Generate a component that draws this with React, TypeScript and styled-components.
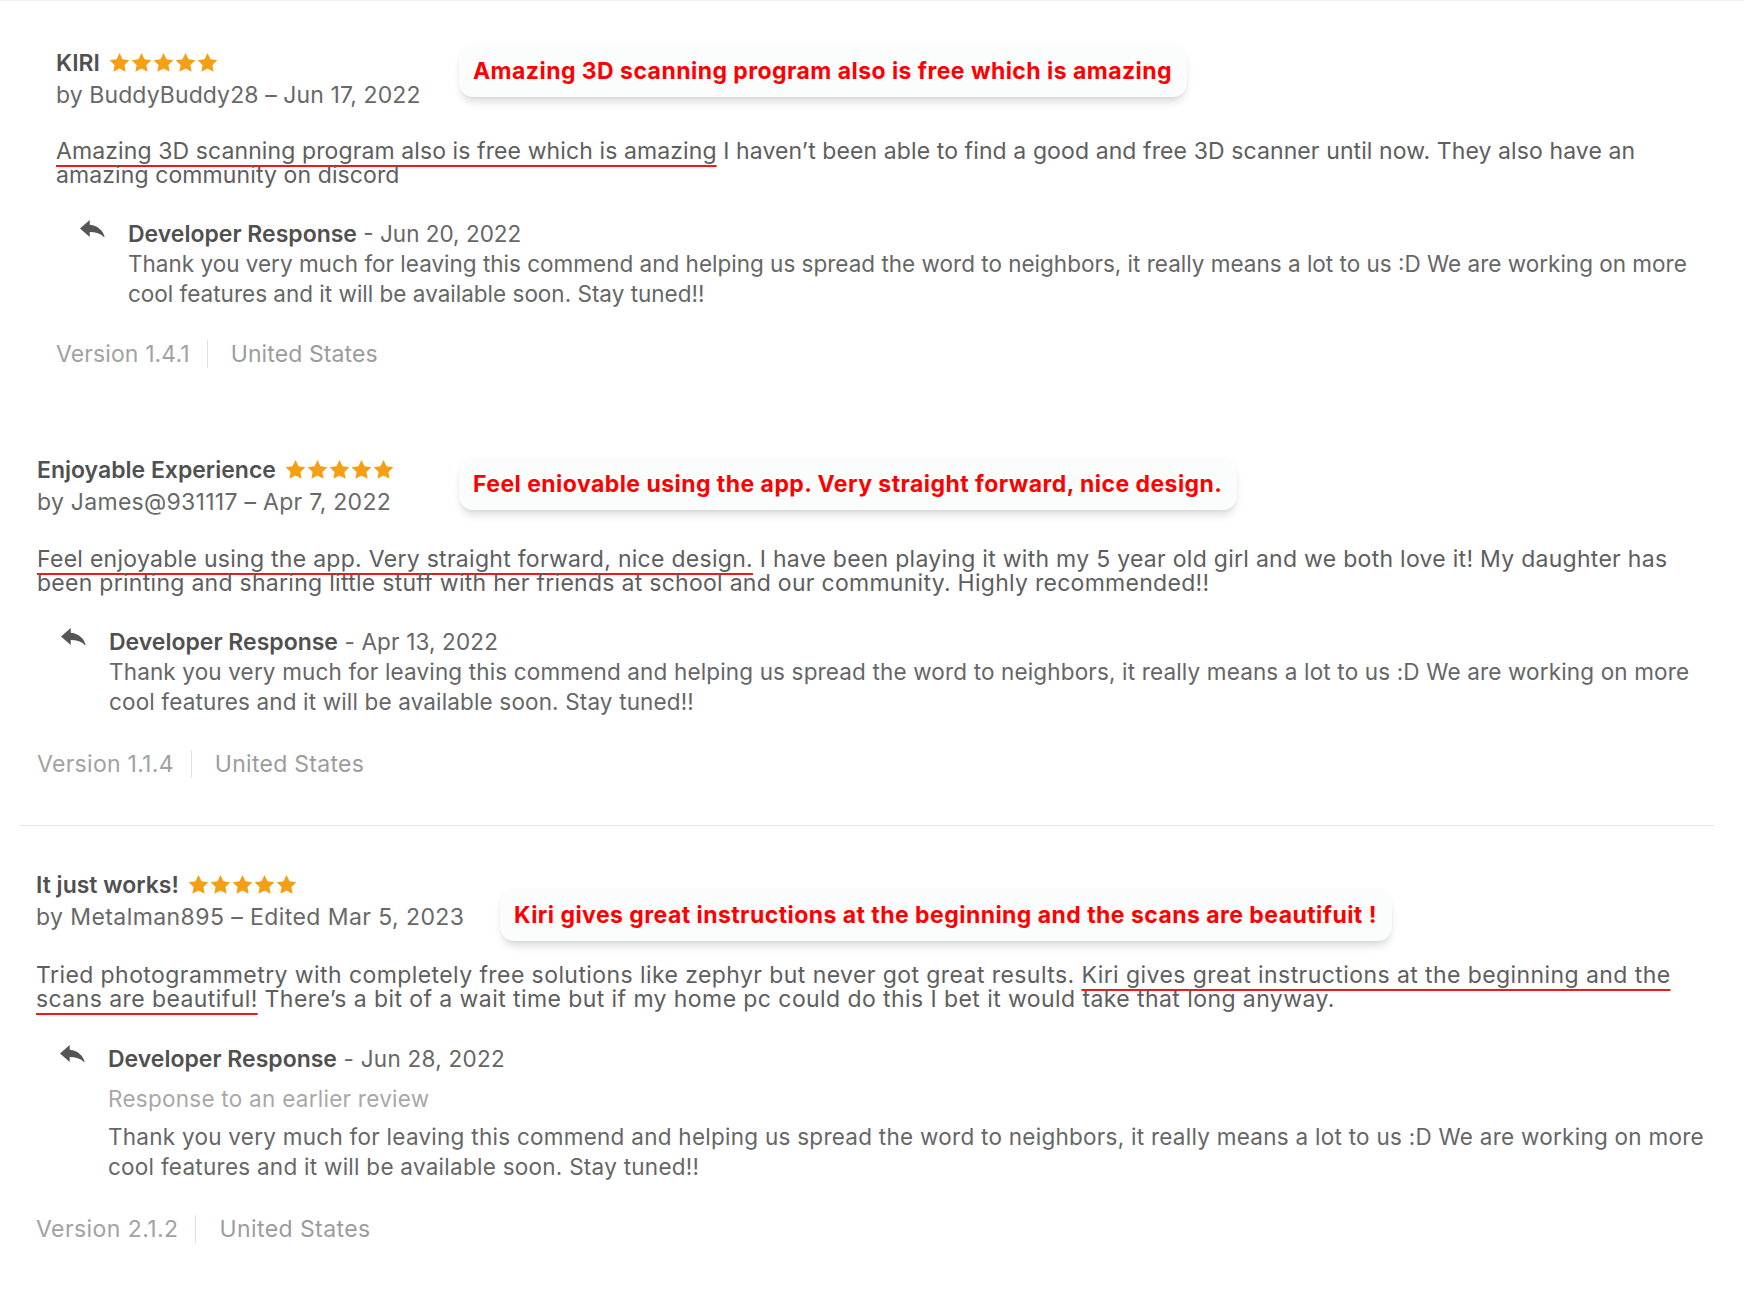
import React from "react";
import styled, { createGlobalStyle } from "styled-components";

const GlobalStyle = createGlobalStyle`
  html, body { margin: 0; padding: 0; background: #ffffff; }
  body { font-family: Inter, "Noto Sans", "Liberation Sans", sans-serif; -webkit-font-smoothing: antialiased; }
`;

const Page = styled.main`
  width: 1744px;
  min-height: 1290px;
  box-sizing: border-box;
  padding-top: 45px;
  border-top: 1px solid #f1f1f1;
  background: #ffffff;
`;

const Review = styled.section<{ $left: number; $gapTop: number; $track: number; $rtrack: number }>`
  --track: ${(p) => p.$track}px;
  --rtrack: ${(p) => p.$rtrack}px;
  position: relative;
  padding-left: ${(p) => p.$left}px;
  margin-top: ${(p) => p.$gapTop}px;
`;

const TitleRow = styled.div`
  display: flex;
  align-items: center;
  height: 33px;
  gap: 9px;
`;

const Title = styled.span`
  font-size: 23px;
  font-weight: 600;
  color: #505050;
`;

const Stars = styled.span`
  display: inline-flex;
  gap: 1px;
  margin-top: -1px;
`;

const Sub = styled.div`
  font-size: 23px;
  line-height: 33px;
  color: #686868;
  letter-spacing: calc(0.1px + var(--track));
`;

const Body = styled.p<{ $extra: number }>`
  margin: ${(p) => 26 + p.$extra}px 0 0 0;
  font-size: 23px;
  line-height: 24px;
  color: #5e5e5e;
  white-space: nowrap;
  letter-spacing: calc(0.1px + var(--track));
`;

const Marked = styled.span`
  text-decoration: underline;
  text-decoration-color: #f01818;
  text-decoration-thickness: 2px;
  text-underline-offset: 6px;
  text-decoration-skip-ink: none;
`;

const Response = styled.div<{ $extra: number }>`
  display: grid;
  grid-template-columns: 72px 1fr;
  margin-top: ${(p) => 32 + p.$extra}px;
`;

const ReplyIcon = styled.svg`
  margin: 1px 0 0 24px;
  width: 25px;
  height: 17px;
  fill: #555555;
`;

const ResponseHead = styled.div`
  font-size: 22.5px;
  line-height: 30px;
  color: #666666;
  white-space: nowrap;
  letter-spacing: var(--rtrack);
`;

const DevName = styled.span`
  font-size: 23px;
  font-weight: 600;
  color: #505050;
  letter-spacing: 0;
`;

const EarlierNote = styled.div`
  margin: 10px 0 8px 0;
  font-size: 22.5px;
  line-height: 30px;
  color: #a8a8a8;
  letter-spacing: var(--rtrack);
`;

const ResponseText = styled.p`
  margin: 0;
  font-size: 22.5px;
  line-height: 30px;
  color: #666666;
  white-space: nowrap;
  letter-spacing: var(--rtrack);
`;

const Meta = styled.div<{ $extra: number }>`
  display: flex;
  align-items: center;
  margin-top: ${(p) => 31 + p.$extra}px;
  height: 30px;
  font-size: 23px;
  color: #a2a2a2;
  letter-spacing: calc(0.1px + var(--track));
`;

const Version = styled.span`
  padding-right: 17px;
  border-right: 1px solid #e2e2e2;
  line-height: 28px;
`;

const Country = styled.span`
  padding-left: 23px;
  color: #9c9c9c;
`;

const Divider = styled.hr`
  border: none;
  border-top: 1px solid #e4e4e4;
  margin: 46px 30px 0 20px;
`;

const Callout = styled.div<{ $x: number; $y: number }>`
  position: absolute;
  left: ${(p) => p.$x}px;
  top: ${(p) => p.$y}px;
  height: 53px;
  box-sizing: border-box;
  padding: 0 15px 0 14px;
  display: flex;
  align-items: center;
  background: #fbfdfd;
  border-radius: 14px;
  box-shadow: 0 7px 10px -3px rgba(0, 0, 0, 0.16), 0 1px 3px rgba(0, 0, 0, 0.04);
  font-family: Inter, "Liberation Sans", sans-serif;
  font-weight: 700;
  font-size: 23px;
  letter-spacing: 0.45px;
  color: #ff0000;
  white-space: nowrap;
`;

const StarIcon = () => (
  <svg width="21" height="19" viewBox="2 2 20 19.3" aria-hidden="true">
    <path
      fill="#f5a014"
      d="M12 2l3.09 6.26L22 9.27l-5 4.87 1.18 6.88L12 17.77l-6.18 3.25L7 14.14 2 9.27l6.91-1.01L12 2z"
    />
  </svg>
);

const FiveStars = () => (
  <Stars>
    {[0, 1, 2, 3, 4].map((i) => (
      <StarIcon key={i} />
    ))}
  </Stars>
);

const Reply = () => (
  <ReplyIcon viewBox="3 5 18 14" preserveAspectRatio="none" aria-hidden="true">
    <path d="M10 9V5l-7 7 7 7v-4.1c5 0 8.5 1.6 11 5.1-1-5-4-10-11-11z" />
  </ReplyIcon>
);

type ReviewData = {
  title: string;
  sub: string;
  left: number;
  gapTop: number;
  track: number;
  rtrack: number;
  bodyExtra: number;
  responseExtra: number;
  metaExtra: number;
  callout: { text: string; x: number; y: number };
  body: React.ReactNode;
  devDate: string;
  earlier?: boolean;
  version: string;
};

const responseLines = (
  <>
    Thank you very much for leaving this commend and helping us spread the word to neighbors, it really means a lot to us :D We are working on more
    <br />
    cool features and it will be available soon. Stay tuned!!
  </>
);

const reviews: ReviewData[] = [
  {
    title: "KIRI",
    sub: "by BuddyBuddy28 – Jun 17, 2022",
    left: 56,
    gapTop: 0,
    track: 0,
    rtrack: 0,
    bodyExtra: 1,
    responseExtra: 0,
    metaExtra: -1,
    callout: { text: "Amazing 3D scanning program also is free which is amazing", x: 459, y: -2 },
    body: (
      <>
        <Marked>Amazing 3D scanning program also is free which is amazing</Marked> I haven’t been able to find a good and free 3D scanner until now. They also have an
        <br />
        amazing community on discord
      </>
    ),
    devDate: "Jun 20, 2022",
    version: "Version 1.4.1",
  },
  {
    title: "Enjoyable Experience",
    sub: "by James@931117 – Apr 7, 2022",
    left: 37,
    gapTop: 84,
    track: 0.18,
    rtrack: 0.15,
    bodyExtra: 2,
    responseExtra: 0,
    metaExtra: 1,
    callout: { text: "Feel eniovable using the app. Very straight forward, nice design.", x: 459, y: 4 },
    body: (
      <>
        <Marked>Feel enjoyable using the app. Very straight forward, nice design.</Marked> I have been playing it with my 5 year old girl and we both love it! My daughter has
        <br />
        been printing and sharing little stuff with her friends at school and our community. Highly recommended!!
      </>
    ),
    devDate: "Apr 13, 2022",
    version: "Version 1.1.4",
  },
  {
    title: "It just works!",
    sub: "by Metalman895 – Edited Mar 5, 2023",
    left: 36,
    gapTop: 42,
    track: 0.32,
    rtrack: 0.26,
    bodyExtra: 3,
    responseExtra: 1,
    metaExtra: 1,
    callout: { text: "Kiri gives great instructions at the beginning and the scans are beautifuit !", x: 500, y: 20 },
    body: (
      <>
        Tried photogrammetry with completely free solutions like zephyr but never got great results. <Marked>Kiri gives great instructions at the beginning and the</Marked>
        <br />
        <Marked>scans are beautiful!</Marked> There’s a bit of a wait time but if my home pc could do this I bet it would take that long anyway.
      </>
    ),
    devDate: "Jun 28, 2022",
    earlier: true,
    version: "Version 2.1.2",
  },
];

const ReviewCard = ({ r }: { r: ReviewData }) => (
  <Review $left={r.left} $gapTop={r.gapTop} $track={r.track} $rtrack={r.rtrack}>
    <TitleRow>
      <Title>{r.title}</Title>
      <FiveStars />
    </TitleRow>
    <Sub>{r.sub}</Sub>
    <Callout $x={r.callout.x} $y={r.callout.y}>
      {r.callout.text}
    </Callout>
    <Body $extra={r.bodyExtra}>{r.body}</Body>
    <Response $extra={r.responseExtra}>
      <Reply />
      <div>
        <ResponseHead>
          <DevName>Developer Response</DevName> - {r.devDate}
        </ResponseHead>
        {r.earlier && <EarlierNote>Response to an earlier review</EarlierNote>}
        <ResponseText>{responseLines}</ResponseText>
      </div>
    </Response>
    <Meta $extra={r.metaExtra}>
      <Version>{r.version}</Version>
      <Country>United States</Country>
    </Meta>
  </Review>
);

export default function App() {
  return (
    <Page>
      <GlobalStyle />
      <ReviewCard r={reviews[0]} />
      <ReviewCard r={reviews[1]} />
      <Divider />
      <ReviewCard r={reviews[2]} />
    </Page>
  );
}
